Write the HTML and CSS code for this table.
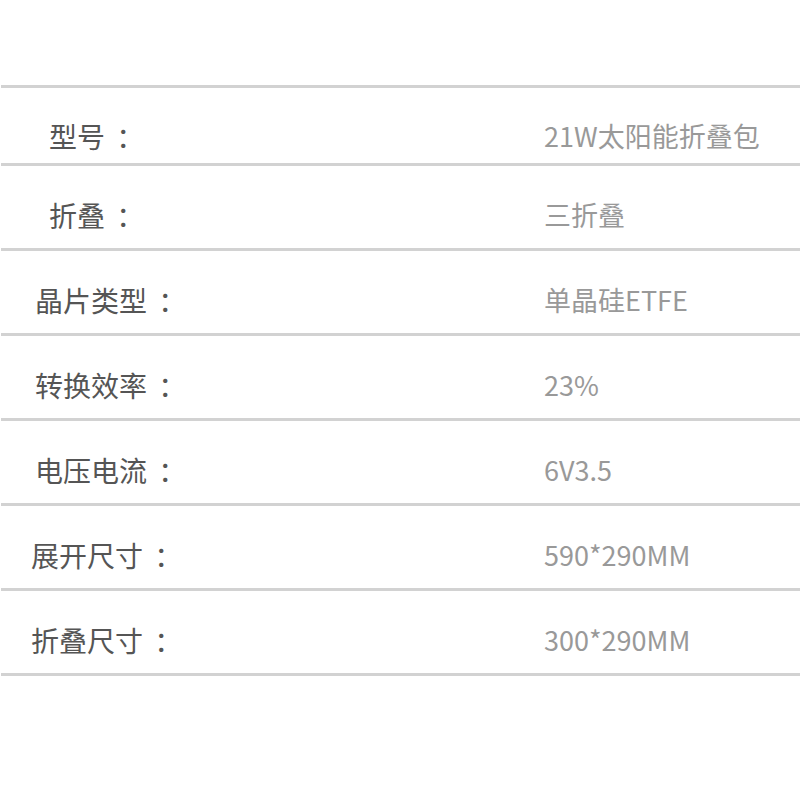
FILE: index.html
```html
<!DOCTYPE html>
<html lang="zh-CN">
<head>
<meta charset="utf-8">
<title>参数</title>
<link rel="stylesheet" href="styles.css">
</head>
<body>
<div class="specs">
  <div class="row row-first">
    <div class="label pad-a">型号<span class="colon">：</span></div>
    <div class="value">21W太阳能折叠包</div>
  </div>
  <div class="row">
    <div class="label pad-a">折叠<span class="colon">：</span></div>
    <div class="value">三折叠</div>
  </div>
  <div class="row">
    <div class="label pad-b">晶片类型<span class="colon">：</span></div>
    <div class="value">单晶硅ETFE</div>
  </div>
  <div class="row">
    <div class="label pad-b">转换效率<span class="colon">：</span></div>
    <div class="value">23%</div>
  </div>
  <div class="row">
    <div class="label pad-b">电压电流<span class="colon">：</span></div>
    <div class="value">6V3.5</div>
  </div>
  <div class="row">
    <div class="label pad-c">展开尺寸<span class="colon">：</span></div>
    <div class="value">590*290MM</div>
  </div>
  <div class="row">
    <div class="label pad-c">折叠尺寸<span class="colon">：</span></div>
    <div class="value">300*290MM</div>
  </div>
</div>
</body>
</html>
```

FILE: styles.css
```css
html, body {
  margin: 0;
  padding: 0;
  background: #ffffff;
}

body {
  font-family: "Noto Sans CJK SC", "Noto Sans", sans-serif;
}

.specs {
  margin: 85px 0 0 1px;
  border-top: 3px solid #d2d2d2;
}

.row {
  display: grid;
  grid-template-columns: 543px 1fr;
  height: 82px;
  border-bottom: 3px solid #d2d2d2;
  box-sizing: content-box;
}

.row-first {
  height: 75px;
}

.label,
.value {
  padding-top: 34px;
  line-height: 30px;
  white-space: nowrap;
}

.row-first .label,
.row-first .value {
  padding-top: 33px;
}

.label {
  font-size: 28px;
  color: #555555;
}

.colon {
  padding-left: 0.4em;
}

.value {
  font-size: 27px;
  color: #999999;
}

.pad-a {
  padding-left: 48px;
}

.pad-b {
  padding-left: 34px;
}

.pad-c {
  padding-left: 30px;
}
```
